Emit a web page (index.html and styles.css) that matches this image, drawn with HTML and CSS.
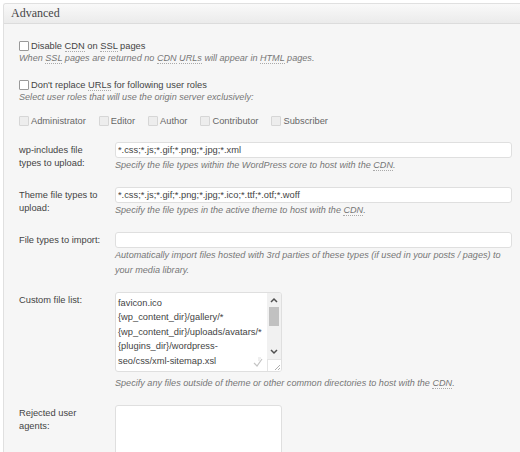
FILE: index.html
```html
<!DOCTYPE html>
<html>
<head>
<meta charset="utf-8">
<link rel="stylesheet" href="styles.css">
</head>
<body>
<div class="panel">
  <div class="panel-head"><h3 class="panel-title">Advanced</h3></div>
  <div class="panel-body">
    <label class="opt-check"><input type="checkbox" class="cb"><span>Disable <abbr>CDN</abbr> on <abbr>SSL</abbr> pages</span></label>
    <div class="desc">When <abbr>SSL</abbr> pages are returned no <abbr>CDN</abbr> <abbr>URLs</abbr> will appear in <abbr>HTML</abbr> pages.</div>

    <label class="opt-check opt-second"><input type="checkbox" class="cb"><span>Don't replace <abbr>URLs</abbr> for following user roles</span></label>
    <div class="desc">Select user roles that will use the origin server exclusively:</div>

    <div class="roles">
      <label class="role"><input type="checkbox" class="cb cb-off" disabled><span>Administrator</span></label>
      <label class="role"><input type="checkbox" class="cb cb-off" disabled><span>Editor</span></label>
      <label class="role"><input type="checkbox" class="cb cb-off" disabled><span>Author</span></label>
      <label class="role"><input type="checkbox" class="cb cb-off" disabled><span>Contributor</span></label>
      <label class="role"><input type="checkbox" class="cb cb-off" disabled><span>Subscriber</span></label>
    </div>

    <div class="form">
      <div class="field">
        <div class="field-label">wp-includes file types to upload:</div>
        <div class="field-ctrl">
          <input class="text" type="text" value="*.css;*.js;*.gif;*.png;*.jpg;*.xml">
          <div class="desc desc-f">Specify the file types within the WordPress core to host with the <abbr>CDN</abbr>.</div>
        </div>
      </div>
      <div class="field">
        <div class="field-label">Theme file types to upload:</div>
        <div class="field-ctrl">
          <input class="text" type="text" value="*.css;*.js;*.gif;*.png;*.jpg;*.ico;*.ttf;*.otf;*.woff">
          <div class="desc desc-f">Specify the file types in the active theme to host with the <abbr>CDN</abbr>.</div>
        </div>
      </div>
      <div class="field">
        <div class="field-label">File types to import:</div>
        <div class="field-ctrl">
          <input class="text" type="text" value="">
          <div class="desc desc-f">Automatically import files hosted with 3rd parties of these types (if used in your posts / pages) to your media library.</div>
        </div>
      </div>
      <div class="field">
        <div class="field-label">Custom file list:</div>
        <div class="field-ctrl">
          <div class="area">
            <div class="area-text">
              <div>favicon.ico</div>
              <div>{wp_content_dir}/gallery/*</div>
              <div>{wp_content_dir}/uploads/avatars/*</div>
              <div>{plugins_dir}/wordpress-</div>
              <div>seo/css/xml-sitemap.xsl</div>
            </div>
            <svg class="spell" width="12" height="12" viewBox="0 0 12 12"><path d="M2 7 L5 10 L10 3" fill="none" stroke="#c4c4c4" stroke-width="1.2"/><path d="M6 2 H9 M6 4 H8" stroke="#d6d6d6" stroke-width="0.8"/></svg>
            <div class="sbar">
              <div class="sbtn"><svg width="8" height="6" viewBox="0 0 8 6"><path d="M1 5 L4 2 L7 5" fill="none" stroke="#505050" stroke-width="1.5"/></svg></div>
              <div class="strack"><div class="sthumb"></div></div>
              <div class="sbtn"><svg width="8" height="6" viewBox="0 0 8 6"><path d="M1 1 L4 4 L7 1" fill="none" stroke="#505050" stroke-width="1.5"/></svg></div>
              <div class="scorner"><svg width="10" height="10" viewBox="0 0 10 10"><path d="M9 4 L4 9 M9 7 L7 9" stroke="#999" stroke-width="0.8"/></svg></div>
            </div>
          </div>
          <div class="desc desc-f">Specify any files outside of theme or other common directories to host with the <abbr>CDN</abbr>.</div>
        </div>
      </div>
      <div class="field">
        <div class="field-label">Rejected user agents:</div>
        <div class="field-ctrl">
          <div class="area area-empty"></div>
        </div>
      </div>
    </div>
  </div>
</div>
</body>
</html>
```

FILE: styles.css
```css
* { box-sizing: border-box; }
body {
  margin: 0;
  background: #fff;
  font-family: "Liberation Sans", Arial, sans-serif;
  font-size: 9.3px;
  color: #444;
}
abbr {
  text-decoration: none;
  border-bottom: 1px dotted #aaa;
}
.panel {
  margin: 3px 0 0 3px;
  border: 1px solid #e0e0e0;
  border-right: 0;
  border-bottom: 0;
  border-top-left-radius: 3px;
  background: #f6f6f6;
  height: 460px;
  overflow: hidden;
}
.panel-head {
  height: 20px;
  border-bottom: 1px solid #dcdcdc;
  background: linear-gradient(#f9f9f9, #ebebeb);
  padding-left: 7px;
}
.panel-title {
  margin: 0;
  font: normal 12px/19px "Liberation Serif", "Times New Roman", serif;
  color: #464646;
}
.panel-body {
  padding: 16px 0 0 15px;
}
.opt-check, .role {
  display: flex;
  align-items: center;
  gap: 2px;
  line-height: 12px;
  height: 12px;
}
.opt-second { margin-top: 15px; }
.cb {
  appearance: none;
  -webkit-appearance: none;
  width: 10px;
  height: 10px;
  margin: 0;
  border: 1px solid #999;
  border-radius: 1px;
  background: #fff;
  flex: none;
}
.cb-off {
  border-color: #d6d6d6;
  background: #ededed;
}
.desc {
  font-style: italic;
  font-size: 9.1px;
  color: #777;
  line-height: 12px;
}
.roles {
  display: flex;
  gap: 13px;
  margin-top: 12px;
}
.role span { color: #666; }
.form { margin-top: 15px; }
.field {
  display: grid;
  grid-template-columns: 96px 397px;
  margin-bottom: 14px;
}
.field-label {
  padding: 2px 12px 0 0;
  line-height: 13px;
  color: #444;
}
.text {
  display: block;
  width: 100%;
  height: 16px;
  margin: 0;
  padding: 0 2px;
  border: 1px solid #dfdfdf;
  border-radius: 3px;
  background: #fff;
  font: 9.3px "Liberation Sans", Arial, sans-serif;
  color: #444;
  outline: none;
}
.desc-f { line-height: 15px; }
.area {
  position: relative;
  display: flex;
  width: 167px;
  height: 80px;
  margin-bottom: 4px;
  border: 1px solid #dfdfdf;
  border-radius: 3px;
  background: #fff;
  overflow: hidden;
}
.area-text {
  flex: 1;
  padding: 3px 0 0 2px;
  line-height: 14.4px;
  white-space: nowrap;
  color: #444;
}
.spell {
  position: absolute;
  right: 17px;
  bottom: 3px;
}
.sbar {
  width: 14px;
  flex: none;
  display: flex;
  flex-direction: column;
  background: #f1f1f1;
}
.sbtn {
  height: 14px;
  display: flex;
  align-items: center;
  justify-content: center;
}
.strack { flex: 1; padding: 0 2px; }
.sthumb {
  height: 19px;
  background: #c1c1c1;
}
.scorner {
  height: 12px;
  background: #fff;
  border-top: 1px solid #e4e4e4;
  border-left: 1px solid #e4e4e4;
  display: flex;
  align-items: flex-end;
  justify-content: flex-end;
}
.area-empty {
  height: 70px;
}
```
